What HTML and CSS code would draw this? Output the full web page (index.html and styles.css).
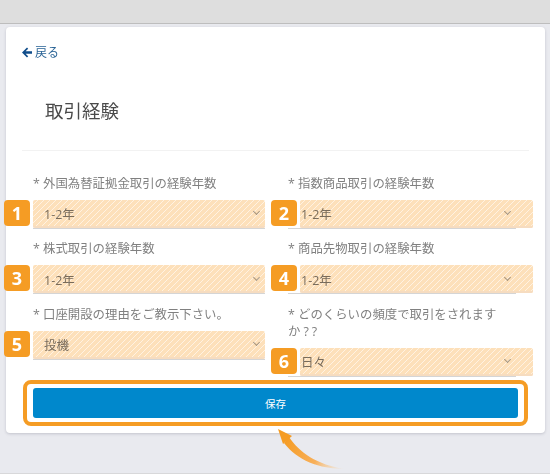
FILE: index.html
```html
<!DOCTYPE html>
<html lang="ja">
<head>
<meta charset="utf-8">
<title>取引経験</title>
<link rel="stylesheet" href="styles.css">
</head>
<body>
<div class="topbar"></div>
<main class="card">
  <a class="back" href="#">
    <svg class="back-icon" viewBox="0 0 10 11" aria-hidden="true"><path d="M5 .6L6.2 1.8 3.6 4.3H10V6.7H3.6L6.2 9.2 5 10.4 0 5.5Z"/></svg>
    <span>戻る</span>
  </a>
  <h1 class="title">取引経験</h1>
  <hr class="divider">
  <form class="grid">
    <div class="field left">
      <label>* 外国為替証拠金取引の経験年数</label>
      <div class="select"><span>1-2年</span><i class="chev"></i></div>
      <b class="badge">1</b>
    </div>
    <div class="field right">
      <label>* 指数商品取引の経験年数</label>
      <div class="select"><span>1-2年</span><i class="chev"></i></div>
      <b class="badge">2</b>
    </div>
    <div class="field left">
      <label>* 株式取引の経験年数</label>
      <div class="select"><span>1-2年</span><i class="chev"></i></div>
      <b class="badge">3</b>
    </div>
    <div class="field right">
      <label>* 商品先物取引の経験年数</label>
      <div class="select"><span>1-2年</span><i class="chev"></i></div>
      <b class="badge">4</b>
    </div>
    <div class="field left">
      <label>* 口座開設の理由をご教示下さい。</label>
      <div class="select"><span>投機</span><i class="chev"></i></div>
      <b class="badge">5</b>
    </div>
    <div class="field right">
      <label>* どのくらいの頻度で取引をされますか<span class="qq">??</span></label>
      <div class="select"><span>日々</span><i class="chev"></i></div>
      <b class="badge">6</b>
    </div>
  </form>
  <div class="actions">
    <button class="save" type="button">保存</button>
    <span class="highlight"></span>
  </div>
</main>
<svg class="pointer" viewBox="0 0 80 50" aria-hidden="true">
  <defs>
    <linearGradient id="fade" gradientUnits="userSpaceOnUse" x1="10" y1="12" x2="70" y2="41">
      <stop offset="0" stop-color="#f59c24"/>
      <stop offset="0.55" stop-color="#f8b05a"/>
      <stop offset="1" stop-color="#fbd7a8" stop-opacity="0"/>
    </linearGradient>
  </defs>
  <path d="M14 9C24 24 42 37 70 41C44 41 22 32 9 15Z" fill="url(#fade)"/>
  <path d="M3 1L17 8L8 16Z" fill="#f59c24"/>
</svg>
</body>
</html>
```
FILE: styles.css
```css
* { box-sizing: border-box; }
html, body { margin: 0; height: 474px; overflow: hidden; }
body {
  position: relative;
  background: #e9eaef;
  font-family: "Open Sans", "Noto Sans CJK JP", sans-serif;
  color: #666;
  border-bottom: 1px solid #d8d8da;
}
.topbar {
  height: 24px;
  background: #dedede;
  border-bottom: 1px solid #bdbdbd;
}
.card {
  position: relative;
  margin: 3px 5px 0 6px;
  height: 406px;
  padding: 16px 16px 0 16px;
  background: #fff;
  border-radius: 4px;
  box-shadow: 0 1px 3px rgba(60, 60, 80, .22);
}
.back {
  display: flex;
  align-items: center;
  gap: 3px;
  height: 18px;
  color: #2a6496;
  font-size: 12px;
  text-decoration: none;
}
.back-icon { width: 10px; height: 11px; fill: #0f4c8a; }
.title {
  margin: 38px 0 0 23px;
  height: 24px;
  font-size: 18.5px;
  line-height: 24px;
  font-weight: 400;
  color: #4a4a4a;
}
.divider {
  margin: 27px 0 0;
  border: 0;
  border-top: 1px solid #f2f2f2;
}
.grid {
  display: grid;
  grid-template-columns: 232px 228px;
  column-gap: 23px;
  row-gap: 11.5px;
  align-items: start;
  margin: 23.5px 0 0 11px;
}
.field { position: relative; }
.field label {
  display: block;
  margin-bottom: 8px;
  font-size: 12.4px;
  line-height: 17px;
  color: #808080;
}
.qq { letter-spacing: 3px; margin-left: 3px; }
.select {
  position: relative;
  display: flex;
  align-items: center;
  height: 29px;
  padding: 0 5px 0 11px;
  font-size: 12.5px;
  color: #7a7a7a;
  border-bottom: 1px solid #d5d5d5;
  justify-content: space-between;
}
.right .select { padding-left: 13px; }
.select::after {
  content: "";
  position: absolute;
  inset: 0;
  border-radius: 2px;
  mix-blend-mode: multiply;
  background: repeating-linear-gradient(135deg, #fde0ba 0 3px, #fff2e2 3px 4.2426px);
  box-shadow: inset 0 -2px #f6dcc0;
}
.right .select::after { left: 12px; right: -17px; }
.chev {
  width: 5px;
  height: 5px;
  margin: -4px 1px 0 0;
  border-right: 1px solid #aaa;
  border-bottom: 1px solid #aaa;
  transform: rotate(45deg);
}
.badge {
  position: absolute;
  bottom: 3px;
  width: 26px;
  height: 26px;
  border-radius: 4px;
  background: #f59c24;
  color: #fff;
  font-size: 18px;
  font-weight: 700;
  line-height: 26px;
  text-align: center;
}
.left .badge { left: -29px; }
.right .badge { left: -17px; }
.actions {
  position: relative;
  margin: 11.5px 11px 0 11px;
}
.save {
  display: block;
  width: 485px;
  height: 30px;
  border: 0;
  border-radius: 3px;
  background: #0088cc;
  color: #fff;
  font: 400 10.5px "Open Sans", "Noto Sans CJK JP", sans-serif;
}
.highlight {
  position: absolute;
  left: -10px;
  top: -8px;
  width: 505px;
  height: 46px;
  border: 4px solid #f59c24;
  border-radius: 8px;
}
.pointer {
  position: absolute;
  left: 275px;
  top: 428px;
  width: 80px;
  height: 50px;
}
```
